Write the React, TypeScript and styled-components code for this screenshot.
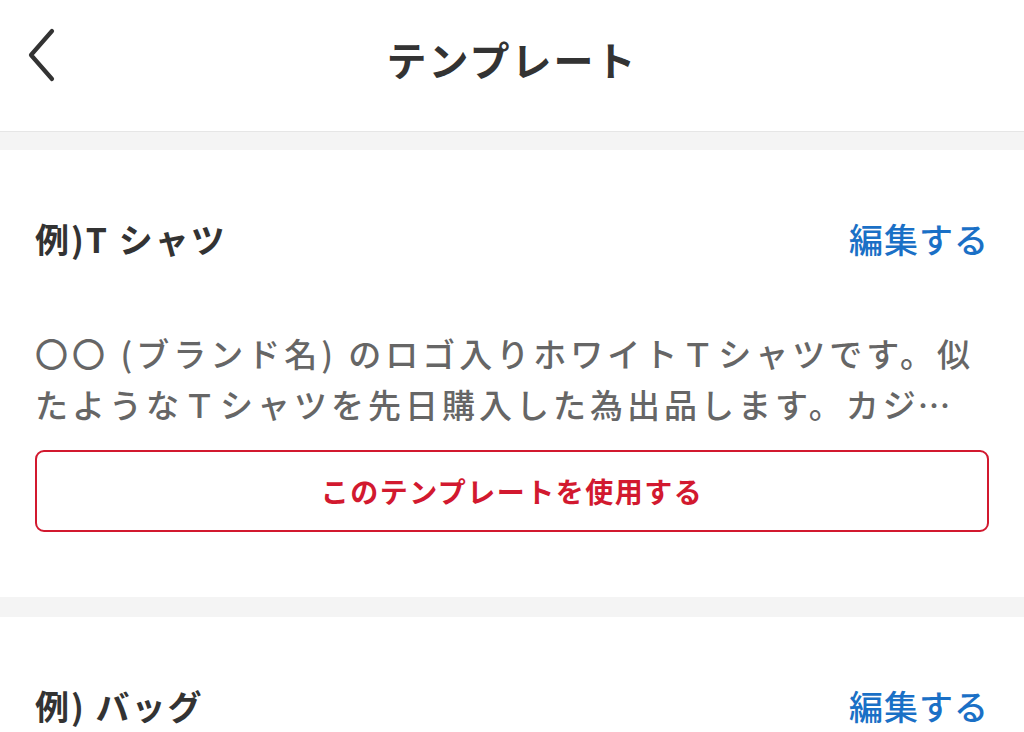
import React from "react";
import styled, { createGlobalStyle } from "styled-components";

const Global = createGlobalStyle`
  html, body { margin: 0; padding: 0; background: #f4f4f4; }
  body { font-family: "Noto Sans CJK JP", "Noto Sans", sans-serif; }
`;

const Page = styled.div`
  width: 1024px;
  height: 732px;
  overflow: hidden;
  background: #f4f4f4;
  display: flex;
  flex-direction: column;
`;

const Header = styled.header`
  height: 131px;
  flex: none;
  background: #fff;
  border-bottom: 1px solid #e6e6e6;
  display: flex;
  align-items: center;
  justify-content: center;
  position: relative;
`;

const BackButton = styled.button`
  position: absolute;
  left: 22px;
  top: 24px;
  width: 40px;
  height: 62px;
  border: none;
  background: none;
  padding: 0;
  display: flex;
  align-items: center;
  justify-content: center;
`;

const Title = styled.h1`
  margin: 0;
  margin-top: -14px;
  font-size: 40px;
  font-weight: 700;
  color: #333;
  letter-spacing: 2px;
`;

const List = styled.div`
  display: flex;
  flex-direction: column;
  gap: 20px;
  padding-top: 18px;
`;

const Card = styled.section`
  background: #fff;
  padding: 63px 35px 65px;
  display: flex;
  flex-direction: column;
`;

const CardHead = styled.div`
  display: flex;
  align-items: center;
  justify-content: space-between;
  height: 50px;
`;

const CardTitle = styled.h2`
  margin: 0;
  font-size: 34px;
  font-weight: 700;
  color: #333;
  letter-spacing: 2px;
  white-space: pre;
`;

const EditLink = styled.a`
  font-size: 34px;
  font-weight: 500;
  color: #1a70c6;
  text-decoration: none;
  letter-spacing: 1px;
`;

const Description = styled.p`
  margin: 65px 0 0;
  padding-right: 10px;
  font-size: 33px;
  line-height: 51px;
  color: #666;
  font-weight: 500;
  letter-spacing: 4px;
  display: -webkit-box;
  -webkit-line-clamp: 2;
  -webkit-box-orient: vertical;
  overflow: hidden;
`;

const UseButton = styled.button`
  margin-top: 20px;
  height: 82px;
  width: 100%;
  border: 2px solid #d2192f;
  border-radius: 9px;
  background: #fff;
  color: #d2192f;
  font-family: inherit;
  font-size: 28px;
  font-weight: 700;
  letter-spacing: 1.5px;
`;

const Chevron = () => (
  <svg width="40" height="62" viewBox="0 0 40 62" fill="none">
    <path d="M30 7 L9 31 L30 55" stroke="#333" strokeWidth="4.2" strokeLinecap="round" strokeLinejoin="round" />
  </svg>
);

const templates = [
  {
    title: "例)T シャツ",
    body: "〇〇 (ブランド名) のロゴ入りホワイトＴシャツです。似たようなＴシャツを先日購入した為出品します。カジュアルなコーディネートにおすすめです。",
  },
  {
    title: "例) バッグ",
    body: "〇〇 (ブランド名) のバッグです。",
  },
];

export default function App() {
  return (
    <Page>
      <Global />
      <Header>
        <BackButton aria-label="戻る">
          <Chevron />
        </BackButton>
        <Title>テンプレート</Title>
      </Header>
      <List>
        {templates.map((t) => (
          <Card key={t.title}>
            <CardHead>
              <CardTitle>{t.title}</CardTitle>
              <EditLink href="#">編集する</EditLink>
            </CardHead>
            <Description>{t.body}</Description>
            <UseButton>このテンプレートを使用する</UseButton>
          </Card>
        ))}
      </List>
    </Page>
  );
}
